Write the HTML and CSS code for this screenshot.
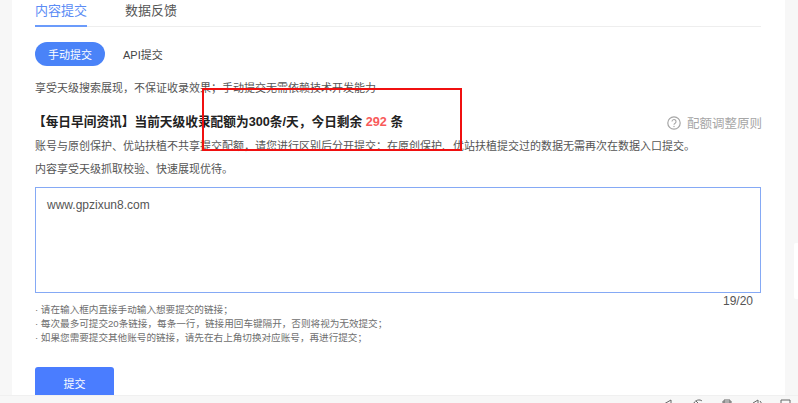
FILE: index.html
```html
<!DOCTYPE html>
<html>

<head>
    <meta charset='utf-8'>
    <title>内容提交</title>
    <link rel="stylesheet" href="styles.css">
</head>

<body>
    <div class="layout">
        <div class="side_left"></div>
        <div class="main">
            <ul class="tabs">
                <li class="tab active">内容提交</li>
                <li class="tab">数据反馈</li>
            </ul>
            <div class="sub_tabs">
                <button class="pill">手动提交</button>
                <span class="pill_text">API提交</span>
            </div>
            <p class="intro">享受天级搜索展现，不保证收录效果；手动提交无需依赖技术开发能力</p>
            <div class="quota_row">
                <h2 class="quota">【每日早间资讯】当前天级收录配额为300条/天，今日剩余 <em>292</em> 条</h2>
                <span class="rule">
                    <svg class="rule_icon" width="14" height="14" viewBox="0 0 14 14">
                        <circle cx="7" cy="7" r="6.2" fill="none" stroke="#a6a6a6" stroke-width="1.2" />
                        <path d="M5 5.6a2 2 0 1 1 3.1 1.6c-.8.5-1.1.8-1.1 1.5" fill="none" stroke="#a6a6a6" stroke-width="1.1" />
                        <circle cx="7" cy="10.5" r=".7" fill="#a6a6a6" />
                    </svg>配额调整原则
                </span>
            </div>
            <p class="note">账号与原创保护、优站扶植不共享提交配额，请您进行区别后分开提交：在原创保护、优站扶植提交过的数据无需再次在数据入口提交。</p>
            <p class="note note_second">内容享受天级抓取校验、快速展现优待。</p>
            <div class="input_box">www.gpzixun8.com</div>
            <div class="count">19/20</div>
            <ul class="tips">
                <li>· 请在输入框内直接手动输入想要提交的链接；</li>
                <li>· 每次最多可提交20条链接，每条一行，链接用回车键隔开，否则将视为无效提交；</li>
                <li>· 如果您需要提交其他账号的链接，请先在右上角切换对应账号，再进行提交；</li>
            </ul>
            <button class="btn_submit">提交</button>
        </div>
        <div class="side_right">
            <div class="side_card"></div>
        </div>
    </div>
    <div class="toolbar">
        <svg width="12" height="12" viewBox="0 0 12 12"><path d="M2 6l7-4v4" fill="none" stroke="#666" /></svg>
        <svg width="12" height="12" viewBox="0 0 12 12"><path d="M2 5c1-3 6-4 8-2M4 3l3 3" fill="none" stroke="#666" /></svg>
        <svg width="12" height="12" viewBox="0 0 12 12"><path d="M3 2h6v4H3zM1 4h10" fill="none" stroke="#666" /></svg>
        <svg width="12" height="12" viewBox="0 0 12 12"><path d="M2 5l5-3v5M9 3l2 3" fill="none" stroke="#666" /></svg>
        <svg width="12" height="12" viewBox="0 0 12 12"><path d="M1 6V2h9v4" fill="none" stroke="#666" /></svg>
    </div>
    <div class="red_box"></div>
</body>

</html>
```

FILE: styles.css
```css
* {
    margin: 0;
    padding: 0;
    box-sizing: border-box;
}

html,
body {
    height: 403px;
    overflow: hidden;
}

body {
    position: relative;
    background-color: #f7f7f7;
    font-family: "Liberation Sans", "Noto Sans CJK SC", sans-serif;
    color: #444;
}

.layout {
    display: flex;
    height: 395px;
}

.side_left {
    width: 12px;
}

.main {
    width: 773px;
    height: 395px;
    padding-left: 23px;
    background-color: white;
    overflow: hidden;
}

.side_right {
    flex: 1;
    padding-top: 243px;
    padding-left: 9px;
}

.side_card {
    height: 56px;
    background-color: white;
    border-radius: 2px 0 0 2px;
}

.toolbar {
    display: flex;
    gap: 17.5px;
    height: 8px;
    padding-left: 662px;
    padding-top: 2px;
    border-top: 1px solid #f0f0f0;
    overflow: hidden;
}

.tabs {
    display: flex;
    gap: 38px;
    width: 726px;
    height: 27px;
    list-style-type: none;
    border-bottom: 1px solid #eee;
}

.tab {
    height: 27px;
    font-size: 13px;
    line-height: 22px;
    color: #555;
}

.active {
    color: #5b8cf5;
    border-bottom: 2px solid #6b9bfb;
}

.sub_tabs {
    display: flex;
    align-items: center;
    gap: 18px;
    margin-top: 15px;
}

.pill {
    width: 70px;
    height: 24px;
    border: none;
    border-radius: 12px;
    background-color: #4a83f8;
    color: white;
    font-family: inherit;
    font-size: 11px;
}

.pill_text {
    font-size: 11px;
    color: #444;
}

.intro {
    margin-top: 12px;
    font-size: 11px;
    line-height: 20px;
    color: #555;
}

.quota_row {
    display: flex;
    justify-content: space-between;
    align-items: flex-end;
    width: 729px;
    margin-top: 14px;
    margin-left: -2px;
}

.quota {
    font-size: 12.7px;
    line-height: 20px;
    color: #222;
}

.quota em {
    font-style: normal;
    color: #f85a5a;
}

.rule {
    display: flex;
    align-items: center;
    gap: 6px;
    font-size: 12.5px;
    color: #a6a6a6;
}

.note {
    margin-top: 7px;
    font-size: 11px;
    line-height: 15px;
    color: #555;
}

.note_second {
    margin-top: 8px;
}

.input_box {
    width: 726px;
    height: 106px;
    margin-top: 10px;
    padding: 8px 11px;
    border: 1px solid #85a9f5;
    font-size: 12px;
    line-height: 18px;
    color: #555;
}

.count {
    width: 718px;
    margin-top: 3px;
    text-align: right;
    font-size: 12px;
    line-height: 10px;
    color: #555;
}

.tips {
    list-style-type: none;
    margin-top: -3px;
    font-size: 9.6px;
    line-height: 14px;
    color: #6e6e6e;
}

.btn_submit {
    display: block;
    width: 79px;
    height: 32px;
    margin-top: 22px;
    border: none;
    border-radius: 3px;
    background-color: #4a7dff;
    color: white;
    font-family: inherit;
    font-size: 11px;
}

.red_box {
    position: absolute;
    left: 202px;
    top: 88px;
    width: 260px;
    height: 63px;
    border: 2px solid #f01010;
}
```
